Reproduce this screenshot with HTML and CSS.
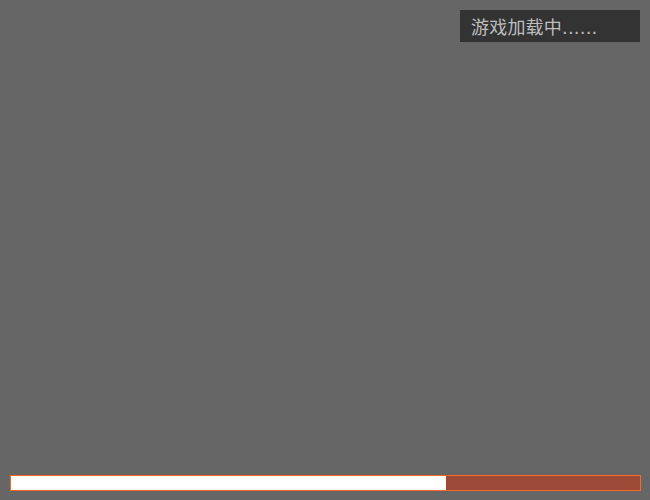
FILE: index.html
```html
<!DOCTYPE html>
<html lang="zh-CN">
<head>
    <meta charset="UTF-8">
    <meta name="viewport" content="width=device-width, initial-scale=1.0">
    <title>游戏加载中</title>
    <link rel="stylesheet" href="styles.css">
</head>
<body>
    <!-- --- GAME STAGE --- -->
    <div class="stage">
        <div class="top-bar">
            <div class="loading-tip">游戏加载中......</div>
        </div>

        <!-- --- PROGRESS --- -->
        <div class="progress">
            <div class="progress-fill" style="width: 69.2%;"></div>
        </div>
    </div>
</body>
</html>
```

FILE: styles.css
```css
/* --- RESET & GLOBAL STYLES --- */
* {
    margin: 0;
    padding: 0;
    box-sizing: border-box;
}

html, body {
    height: 100%;
}

body {
    background-color: #666666;
    font-family: "DejaVu Sans", "Noto Sans CJK SC", sans-serif;
    overflow: hidden;
}

.stage {
    height: 500px;
    display: flex;
    flex-direction: column;
    padding: 10px 9px 9px 10px;
}

.top-bar {
    display: flex;
    justify-content: flex-end;
    padding-right: 1px;
}

.loading-tip {
    width: 180px;
    height: 32px;
    background-color: #333333;
    color: #bdbdbd;
    font-size: 18px;
    line-height: 28px;
    padding: 4px 0 0 11px;
    letter-spacing: 0.2px;
}

.progress {
    margin-top: auto;
    height: 16px;
    border: 1px solid #ff6a1c;
    background-color: #9c4a37;
}

.progress-fill {
    height: 100%;
    background-color: #ffffff;
}
```
